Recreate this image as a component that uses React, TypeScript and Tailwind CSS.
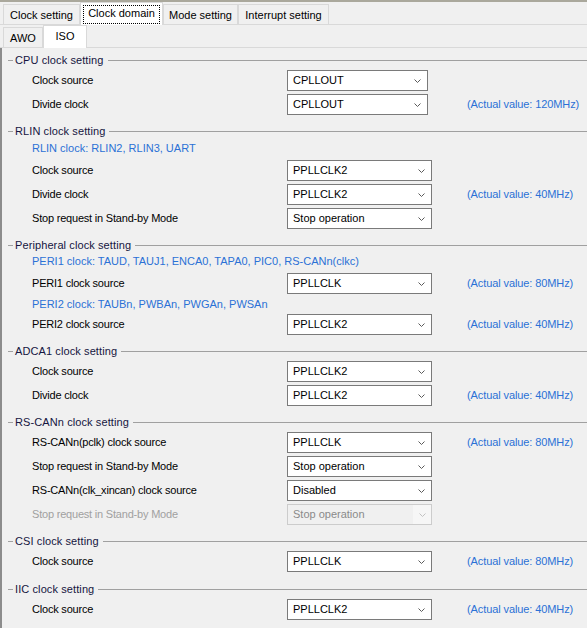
import React from "react";

type Item =
  | { kind: "row"; label: string; value: string; actual?: string; disabled?: boolean; narrow?: boolean }
  | { kind: "info"; text: string; cls: string };

type Group = { title: string; pb: string; items: Item[] };

const groups: Group[] = [
  {
    title: "CPU clock setting",
    pb: "pb-[7px]",
    items: [
      { kind: "row", label: "Clock source", value: "CPLLOUT", narrow: true },
      { kind: "row", label: "Divide clock", value: "CPLLOUT", narrow: true, actual: "120MHz" },
    ],
  },
  {
    title: "RLIN clock setting",
    pb: "pb-[7px]",
    items: [
      { kind: "info", text: "RLIN clock: RLIN2, RLIN3, UART", cls: "h-[19px] pt-[1px]" },
      { kind: "row", label: "Clock source", value: "PPLLCLK2" },
      { kind: "row", label: "Divide clock", value: "PPLLCLK2", actual: "40MHz" },
      { kind: "row", label: "Stop request in Stand-by Mode", value: "Stop operation" },
    ],
  },
  {
    title: "Peripheral clock setting",
    pb: "pb-[7px]",
    items: [
      { kind: "info", text: "PERI1 clock: TAUD, TAUJ1, ENCA0, TAPA0, PIC0, RS-CANn(clkc)", cls: "h-[18px] pt-0" },
      { kind: "row", label: "PERI1 clock source", value: "PPLLCLK", actual: "80MHz" },
      { kind: "info", text: "PERI2 clock: TAUBn, PWBAn, PWGAn, PWSAn", cls: "h-[20px] pt-[4px]" },
      { kind: "row", label: "PERI2 clock source", value: "PPLLCLK2", actual: "40MHz" },
    ],
  },
  {
    title: "ADCA1 clock setting",
    pb: "pb-[7px]",
    items: [
      { kind: "row", label: "Clock source", value: "PPLLCLK2" },
      { kind: "row", label: "Divide clock", value: "PPLLCLK2", actual: "40MHz" },
    ],
  },
  {
    title: "RS-CANn clock setting",
    pb: "pb-[7px]",
    items: [
      { kind: "row", label: "RS-CANn(pclk) clock source", value: "PPLLCLK", actual: "80MHz" },
      { kind: "row", label: "Stop request in Stand-by Mode", value: "Stop operation" },
      { kind: "row", label: "RS-CANn(clk_xincan) clock source", value: "Disabled" },
      { kind: "row", label: "Stop request in Stand-by Mode", value: "Stop operation", disabled: true },
    ],
  },
  {
    title: "CSI clock setting",
    pb: "pb-[8px]",
    items: [{ kind: "row", label: "Clock source", value: "PPLLCLK", actual: "80MHz" }],
  },
  {
    title: "IIC clock setting",
    pb: "pb-[7px]",
    items: [{ kind: "row", label: "Clock source", value: "PPLLCLK2", actual: "40MHz" }],
  },
];

function Chevron({ color }: { color: string }) {
  return (
    <svg width="7" height="4" viewBox="0 0 7 4" className="shrink-0">
      <polyline points="0.5,0.5 3.5,3.5 6.5,0.5" fill="none" stroke={color} strokeWidth="1" />
    </svg>
  );
}

function Combo({ value, disabled, narrow }: { value: string; disabled?: boolean; narrow?: boolean }) {
  if (disabled) {
    return (
      <div className="flex h-[21px] w-[145px] border border-[#cccccc] bg-[#f0f0f0]">
        <span className="flex-1 pl-[5px] leading-[19px] text-[#8a8a8a]">{value}</span>
        <span className="flex w-[18px] items-center justify-center bg-[#f6f6f6]">
          <Chevron color="#c2c2c2" />
        </span>
      </div>
    );
  }
  return (
    <div
      className={`flex h-[21px] items-center border border-[#7a7a7a] bg-white pl-[5px] pr-[6px] ${
        narrow ? "w-[141px]" : "w-[145px]"
      }`}
    >
      <span className="flex-1 text-black">{value}</span>
      <Chevron color="#5a5a5a" />
    </div>
  );
}

function GroupHeader({ title }: { title: string }) {
  return (
    <div className="flex h-[19px] items-center">
      <div className="ml-[6px] h-px w-[5px] bg-[#a0a0a0]" />
      <span className="ml-[2px] tracking-[0.1px] text-[#15153f]">{title}</span>
      <div className="ml-[4px] h-px flex-1 bg-[#a0a0a0]" />
    </div>
  );
}

function Tab({ label, selected, w }: { label: string; selected?: boolean; w: string }) {
  if (selected) {
    return (
      <div
        className={`relative -mb-px flex h-[23px] items-center justify-center border-x border-t border-[#d9d9d9] bg-white pb-[2px] ${w}`}
      >
        {label}
      </div>
    );
  }
  return (
    <div
      className={`flex h-[20px] items-center justify-center border-x border-t border-[#d9d9d9] bg-[#f0f0f0] pt-[1px] ${w}`}
    >
      {label}
    </div>
  );
}

export default function App() {
  return (
    <div
      className="flex h-[628px] w-full flex-col overflow-hidden bg-[#f0f0f0] text-[11px] leading-[13px] text-black"
      style={{ fontFamily: '"Liberation Sans", Arial, sans-serif' }}
    >
      <div className="h-[2px] bg-[#aaa89c]" />

      {/* outer tabs */}
      <div className="flex h-[23px] items-end border-b border-[#d9d9d9] pl-[3px]">
        <Tab label="Clock setting" w="w-[77px]" />
        <div className="relative -mb-px flex h-[23px] w-[83px] items-center justify-center border-x border-t border-[#d9d9d9] bg-white pb-[2px]">
          Clock domain
          <span className="absolute bottom-[1px] left-[2px] right-[2px] top-[2px] border border-dotted border-black" />
        </div>
        <Tab label="Mode setting" w="w-[75px]" />
        <Tab label="Interrupt setting" w="w-[91px]" />
      </div>

      {/* inner tabs */}
      <div className="flex h-[23px] items-end border-b border-[#d9d9d9] pl-[3px]">
        <Tab label="AWO" w="w-[40px]" />
        <Tab label="ISO" selected w="w-[44px]" />
      </div>

      <div className="flex-1 border-l-2 border-[#8c8c8c] pt-[3px]">
        {groups.map((g, gi) => (
          <div key={gi} className={g.pb}>
            <GroupHeader title={g.title} />
            {g.items.map((it, i) => {
              if (it.kind === "info") {
                return (
                  <div key={i} className={`pl-[30px] text-[#2b71d6] ${it.cls}`}>
                    {it.text}
                  </div>
                );
              }
              const prev = g.items[i - 1];
              const mt = prev && prev.kind === "row" ? "mt-[3px]" : "";
              return (
                <div key={i} className={`flex h-[21px] items-center ${mt}`}>
                  <span
                    className={`w-[285px] shrink-0 pl-[30px] tracking-[-0.2px] ${
                      it.disabled ? "text-[#a0a0a0]" : "text-black"
                    }`}
                  >
                    {it.label}
                  </span>
                  <div className="w-[180px] shrink-0">
                    <Combo value={it.value} disabled={it.disabled} narrow={it.narrow} />
                  </div>
                  {it.actual && (
                    <span className="tracking-[-0.1px] text-[#2b71d6]">(Actual value: {it.actual})</span>
                  )}
                </div>
              );
            })}
          </div>
        ))}
      </div>
    </div>
  );
}
